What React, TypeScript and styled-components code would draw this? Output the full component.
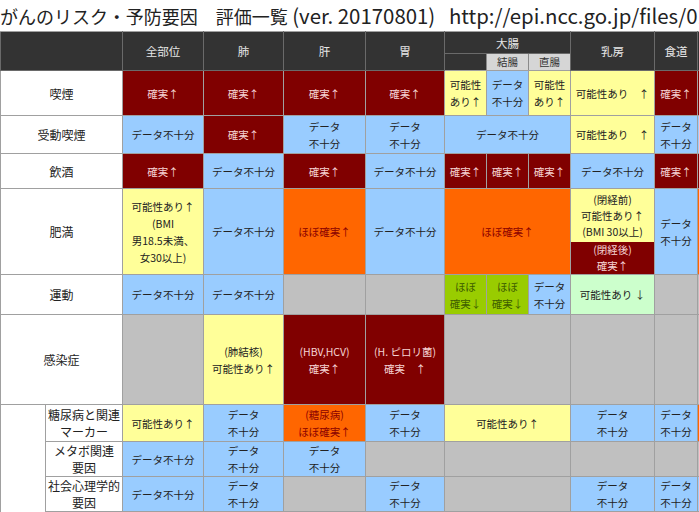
import React from "react";
import styled, { createGlobalStyle } from "styled-components";

const Global = createGlobalStyle`
  html, body { margin: 0; padding: 0; background: #fff; }
  body { font-family: "Noto Sans CJK JP", "Noto Sans", sans-serif; }
`;

type Tone = "dr" | "blue" | "yellow" | "orange" | "grey" | "green" | "mint" | "white";

const tones: Record<Tone, { bg: string; fg: string }> = {
  dr: { bg: "#800000", fg: "#f6d4d4" },
  blue: { bg: "#99ccff", fg: "#222" },
  yellow: { bg: "#ffff99", fg: "#222" },
  orange: { bg: "#ff6600", fg: "#8a0000" },
  grey: { bg: "#c0c0c0", fg: "#222" },
  green: { bg: "#99cc00", fg: "#3d5c00" },
  mint: { bg: "#ccffcc", fg: "#222" },
  white: { bg: "#fff", fg: "#222" },
};

const Title = styled.div`
  height: 31px;
  line-height: 30px;
  padding-left: 0;
  font-size: 18px;
  color: #222;
  white-space: nowrap;
  overflow: hidden;
`;

// latin part of the title is set wider, as in the original slide
const Latin = styled.span`
  font-size: 20.4px;
`;

const Frame = styled.div`
  width: 699px;
  overflow: hidden;
`;

const Table = styled.table`
  border-collapse: collapse;
  table-layout: fixed;
  width: 757px;
`;

const Row = styled.tr<{ $h: number }>`
  height: ${(p) => p.$h}px;
`;

const HeadCell = styled.th`
  background: #333;
  color: #e6e6e6;
  font-weight: normal;
  font-size: 11.5px;
  border: 1px solid #6a6a6a;
  border-top-color: #a0a0a0;
  padding: 0;
  text-align: center;
  vertical-align: middle;
`;

const SubHead = styled.th<{ $blank?: boolean }>`
  background: ${(p) => (p.$blank ? "#333" : "#d6d6d6")};
  color: #333;
  font-weight: normal;
  font-size: 10.5px;
  line-height: 14px;
  border: 1px solid #8a8a8a;
  border-bottom-color: #a0a0a0;
  padding: 0;
  text-align: center;
`;

const Label = styled.td`
  background: #fff;
  color: #222;
  font-size: 12px;
  line-height: 17px;
  border: 1px solid #a0a0a0;
  text-align: center;
  vertical-align: middle;
  padding: 0;
  white-space: pre-line;
`;

const Cell = styled.td<{ $tone: Tone }>`
  background: ${(p) => tones[p.$tone].bg};
  color: ${(p) => tones[p.$tone].fg};
  font-size: 10.5px;
  line-height: 17px;
  border: 1px solid #a0a0a0;
  text-align: center;
  vertical-align: middle;
  padding: 0;
  white-space: pre-line;
`;

const Split = styled.td`
  padding: 0;
  border: 1px solid #a0a0a0;
  height: 85px;
`;

const SplitBox = styled.div`
  display: flex;
  flex-direction: column;
  height: 100%;
`;

const SplitPart = styled.div<{ $tone: Tone; $h: number }>`
  height: ${(p) => p.$h}px;
  background: ${(p) => tones[p.$tone].bg};
  color: ${(p) => tones[p.$tone].fg};
  font-size: 10.5px;
  line-height: 16px;
  display: flex;
  align-items: center;
  justify-content: center;
  text-align: center;
  white-space: pre-line;
`;

type C = { t: Tone; x?: string; s?: number };

const d = (x: string): C => ({ t: "dr", x });
const b = (x = "データ\n不十分"): C => ({ t: "blue", x });
const y = (x: string, s?: number): C => ({ t: "yellow", x, s });
const g = (s?: number): C => ({ t: "grey", s });
const KAKU = "確実↑";
const FU = "データ不十分";

type R = { label: string; h: number; cells: C[]; sub?: boolean };

const rows: R[] = [
  {
    label: "喫煙",
    h: 45,
    cells: [d(KAKU), d(KAKU), d(KAKU), d(KAKU), y("可能性\nあり↑"), b(), y("可能性\nあり↑"), y("可能性あり　↑"), d(KAKU), d(KAKU)],
  },
  {
    label: "受動喫煙",
    h: 38,
    cells: [b(FU), d(KAKU), b(), b(), { t: "blue", x: FU, s: 3 }, y("可能性あり　↑"), b(), b()],
  },
  {
    label: "飲酒",
    h: 35,
    cells: [d(KAKU), b(FU), d(KAKU), b(FU), d(KAKU), d(KAKU), d(KAKU), b(FU), d(KAKU), d(KAKU)],
  },
  { label: "肥満", h: 85, cells: [] },
  {
    label: "運動",
    h: 40,
    cells: [b(FU), b(FU), g(), g(), { t: "green", x: "ほぼ\n確実↓" }, { t: "green", x: "ほぼ\n確実↓" }, b(), { t: "mint", x: "可能性あり ↓" }, g(), g()],
  },
  {
    label: "感染症",
    h: 90,
    cells: [g(), y("(肺結核)\n可能性あり↑"), d("(HBV,HCV)\n確実↑"), d("(H. ピロリ菌)\n確実　↑"), g(3), g(), g(), g()],
  },
  {
    label: "糖尿病と関連\nマーカー",
    h: 37,
    sub: true,
    cells: [y("可能性あり↑"), b(), { t: "orange", x: "(糖尿病)\nほぼ確実↑" }, b(), y("可能性あり↑", 3), b(), b(), { t: "orange", x: "" }],
  },
  {
    label: "メタボ関連\n要因",
    h: 35,
    sub: true,
    cells: [b(FU), b(), b(), g(), g(3), g(), g(), g()],
  },
  {
    label: "社会心理学的\n要因",
    h: 35,
    sub: true,
    cells: [b(FU), b(), g(), b(), g(3), b(), b(), b()],
  },
  {
    label: "",
    h: 30,
    sub: true,
    cells: [g(), { t: "orange", x: "" }, g(), g(), g(3), g(), g(), g()],
  },
];

const widths = [45, 77, 81, 80, 82, 79, 42, 42, 42, 84, 43, 60];

const renderCells = (cells: C[]) =>
  cells.map((c, i) => (
    <Cell key={i} $tone={c.t} colSpan={c.s}>
      {c.x}
    </Cell>
  ));

export default function App() {
  let groupDone = false;
  return (
    <>
      <Global />
      <Title>
        がんのリスク・予防要因　評価一覧
        <Latin>{"\u00a0(ver. 20170801)\u00a0\u00a0\u00a0http://epi.ncc.go.jp/files/01_jphc/cancer_risk.pdf"}</Latin>
      </Title>
      <Frame>
        <Table>
          <colgroup>
            {widths.map((w, i) => (
              <col key={i} style={{ width: w }} />
            ))}
          </colgroup>
          <thead>
            <Row $h={22}>
              <HeadCell colSpan={2} rowSpan={2} />
              <HeadCell rowSpan={2}>全部位</HeadCell>
              <HeadCell rowSpan={2}>肺</HeadCell>
              <HeadCell rowSpan={2}>肝</HeadCell>
              <HeadCell rowSpan={2}>胃</HeadCell>
              <HeadCell colSpan={3}>大腸</HeadCell>
              <HeadCell rowSpan={2}>乳房</HeadCell>
              <HeadCell rowSpan={2}>食道</HeadCell>
              <HeadCell rowSpan={2}>膵臓</HeadCell>
            </Row>
            <Row $h={17}>
              <SubHead $blank />
              <SubHead>結腸</SubHead>
              <SubHead>直腸</SubHead>
            </Row>
          </thead>
          <tbody>
            {rows.map((r) => {
              if (r.label === "肥満") {
                return (
                  <Row key={r.label} $h={r.h}>
                    <Label colSpan={2}>肥満</Label>
                    <Cell $tone="yellow">{"可能性あり↑\n(BMI\n男18.5未満、\n女30以上)"}</Cell>
                    <Cell $tone="blue">{FU}</Cell>
                    <Cell $tone="orange">ほぼ確実↑</Cell>
                    <Cell $tone="blue">{FU}</Cell>
                    <Cell $tone="orange" colSpan={3}>
                      ほぼ確実↑
                    </Cell>
                    <Split>
                      <SplitBox>
                        <SplitPart $tone="yellow" $h={53}>
                          {"(閉経前)\n可能性あり↑\n(BMI 30以上)"}
                        </SplitPart>
                        <SplitPart $tone="dr" $h={32}>
                          {"(閉経後)\n確実↑"}
                        </SplitPart>
                      </SplitBox>
                    </Split>
                    <Cell $tone="blue">{"データ\n不十分"}</Cell>
                    <Cell $tone="orange" />
                  </Row>
                );
              }
              let group = null;
              if (r.sub && !groupDone) {
                groupDone = true;
                group = <Label rowSpan={4} />;
              }
              return (
                <Row key={r.label || "last"} $h={r.h}>
                  {r.sub ? group : null}
                  <Label colSpan={r.sub ? 1 : 2}>{r.label}</Label>
                  {renderCells(r.cells)}
                </Row>
              );
            })}
          </tbody>
        </Table>
      </Frame>
    </>
  );
}
